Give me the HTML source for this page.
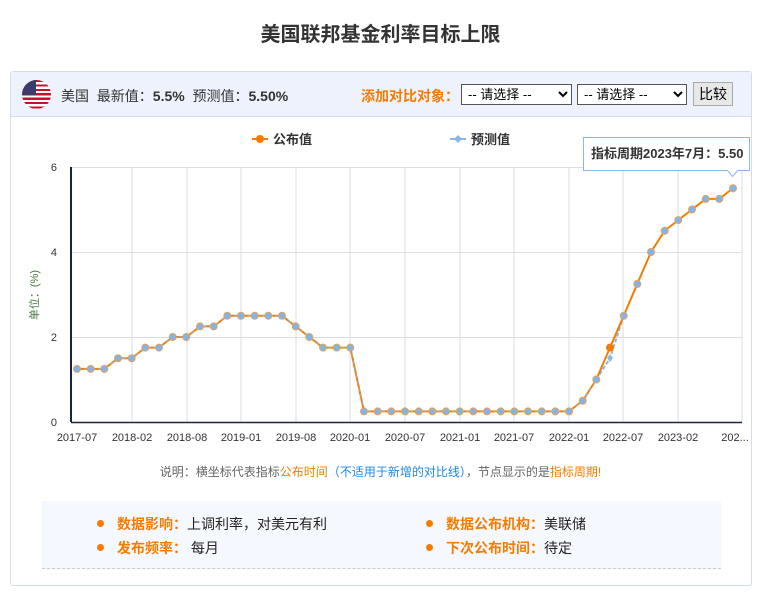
<!DOCTYPE html><html><head><meta charset="utf-8"><style>
body{margin:0;width:761px;height:592px;background:#fff;font-family:"Liberation Sans","Noto Sans CJK SC",sans-serif;position:relative;overflow:hidden}
.t{position:absolute;top:18px;left:0;width:761px;text-align:center;font-size:20px;font-weight:bold;color:#333}
.box{position:absolute;left:10px;top:71px;width:740px;height:513px;border:1px solid #d5dcec;border-radius:3px}
.hd{position:absolute;left:0;top:0;width:740px;height:44px;background:#edf2fc;border-bottom:1px solid #d5dcec}
.flag{position:absolute;left:11px;top:8px;width:29px;height:29px;border-radius:50%;overflow:hidden;background:repeating-linear-gradient(#c8102e 0 2.2px,#fff 2.2px 4.4px)}
.flag:before{content:"";position:absolute;left:0;top:0;width:14px;height:15px;background:#3c3b6e}
.hd span{position:absolute;top:14px;font-size:14px;color:#333}
b{font-weight:bold}
select{position:absolute;top:12px;height:21px;font-size:13px;border:1px solid #555;background:#fff;padding:0 2px}
.btn{position:absolute;left:682px;top:10px;width:38px;height:22px;border:1px solid #aaa;background:#e8e8e8;font-size:14px;text-align:center;line-height:22px}
.note{position:absolute;top:463px;left:0;width:761px;text-align:center;font-size:12px;color:#666}
.info{position:absolute;left:42px;top:501px;width:679px;height:67px;background:#f5f8fe;border-bottom:1px dashed #ccc}
.info div{position:absolute;font-size:14px;color:#222}
.info i{display:inline-block;width:7px;height:7px;border-radius:50%;background:#f57c00;margin-right:13px;vertical-align:2px}
.info em{font-style:normal;color:#f57c00;font-weight:bold}
</style></head><body>
<div class="t">美国联邦基金利率目标上限</div>
<div class="box"><div class="hd"><div class="flag"></div>
<span style="left:50px">美国 &nbsp;最新值：<b>5.5%</b> &nbsp;预测值：<b>5.50%</b></span>
<span style="left:350px;color:#f57c00;font-weight:bold">添加对比对象：</span>
<select style="left:450px;width:111px"><option>-- 请选择 --</option></select>
<select style="left:566px;width:110px"><option>-- 请选择 --</option></select>
<div class="btn">比较</div></div></div>
<svg width="761" height="592" style="position:absolute;left:0;top:0" font-family="Liberation Sans,Noto Sans CJK SC,sans-serif">
<g stroke="#ddd" stroke-width="1">
<line x1="71" x2="742" y1="167.5" y2="167.5"/><line x1="71" x2="742" y1="252.5" y2="252.5"/><line x1="71" x2="742" y1="337.5" y2="337.5"/>
<line x1="132" x2="132" y1="167" y2="422"/><line x1="187" x2="187" y1="167" y2="422"/><line x1="241" x2="241" y1="167" y2="422"/><line x1="296" x2="296" y1="167" y2="422"/><line x1="350" x2="350" y1="167" y2="422"/><line x1="405" x2="405" y1="167" y2="422"/><line x1="460" x2="460" y1="167" y2="422"/><line x1="514" x2="514" y1="167" y2="422"/><line x1="569" x2="569" y1="167" y2="422"/><line x1="623" x2="623" y1="167" y2="422"/><line x1="678" x2="678" y1="167" y2="422"/><line x1="742" x2="742" y1="167" y2="422"/>
</g>
<line x1="71" x2="71" y1="167" y2="422" stroke="#1a2340" stroke-width="2"/>
<line x1="71" x2="742" y1="422.5" y2="422.5" stroke="#1a2340" stroke-width="1.5"/>
<g font-size="11" fill="#333" text-anchor="end"><text x="57" y="426">0</text><text x="57" y="341">2</text><text x="57" y="256">4</text><text x="57" y="171">6</text></g>
<text x="38" y="295" font-size="11" fill="#4a7a3a" transform="rotate(-90 38 295)" text-anchor="middle">单位：(%)</text>
<g font-size="11" fill="#333" text-anchor="middle"><text x="77" y="441">2017-07</text><text x="132" y="441">2018-02</text><text x="187" y="441">2018-08</text><text x="241" y="441">2019-01</text><text x="296" y="441">2019-08</text><text x="350" y="441">2020-01</text><text x="405" y="441">2020-07</text><text x="460" y="441">2021-01</text><text x="514" y="441">2021-07</text><text x="569" y="441">2022-01</text><text x="623" y="441">2022-07</text><text x="678" y="441">2023-02</text><text x="735" y="441">202...</text></g>
<line x1="252" x2="268" y1="139" y2="139" stroke="#f57c00" stroke-width="2"/><circle cx="260" cy="139" r="4" fill="#f57c00"/>
<text x="273" y="144" font-size="13" font-weight="bold" fill="#333">公布值</text>
<line x1="450" x2="466" y1="139" y2="139" stroke="#8ab8e6" stroke-width="2"/><path d="M458 135l4 4-4 4-4-4z" fill="#8ab8e6"/>
<text x="471" y="144" font-size="13" font-weight="bold" fill="#333">预测值</text>
<polyline fill="none" stroke="#8ab8e6" stroke-width="2" stroke-dasharray="4 2" points="596.3,379.5 610,358.25 623.7,315.75"/>
<polyline id="pl" fill="none" stroke="#f57c00" stroke-width="2" points="77,368.9 90.7,368.9 104.3,368.9 118,358.25 131.7,358.25 145.3,347.6 159,347.6 172.7,337 186.3,337 200,326.4 213.7,326.4 227.3,315.75 241,315.75 254.7,315.75 268.3,315.75 282,315.75 295.7,326.4 309.3,337 323,347.6 336.7,347.6 350.3,347.6 364,411.4 377.7,411.4 391.3,411.4 405,411.4 418.7,411.4 432.3,411.4 446,411.4 459.7,411.4 473.3,411.4 487,411.4 500.7,411.4 514.3,411.4 528,411.4 541.7,411.4 555.3,411.4 569,411.4 582.7,400.75 596.3,379.5 610,347.6 623.7,315.75 637.3,283.9 651,252 664.7,230.75 678.3,220.1 692,209.5 705.7,198.9 719.3,198.9 733,188.25"/>
<polyline fill="none" stroke="#8ab8e6" stroke-width="1.2" stroke-dasharray="4 3" opacity="0.8" points="77,368.9 90.7,368.9 104.3,368.9 118,358.25 131.7,358.25 145.3,347.6 159,347.6 172.7,337 186.3,337 200,326.4 213.7,326.4 227.3,315.75 241,315.75 254.7,315.75 268.3,315.75 282,315.75 295.7,326.4 309.3,337 323,347.6 336.7,347.6 350.3,347.6 364,411.4 377.7,411.4 391.3,411.4 405,411.4 418.7,411.4 432.3,411.4 446,411.4 459.7,411.4 473.3,411.4 487,411.4 500.7,411.4 514.3,411.4 528,411.4 541.7,411.4 555.3,411.4 569,411.4 582.7,400.75 596.3,379.5"/>
<g fill="#86b3e2" stroke="#f0a050" stroke-width="0.8">
<circle cx="77" cy="368.9" r="3.6"/><circle cx="90.7" cy="368.9" r="3.6"/><circle cx="104.3" cy="368.9" r="3.6"/><circle cx="118" cy="358.25" r="3.6"/><circle cx="131.7" cy="358.25" r="3.6"/><circle cx="145.3" cy="347.6" r="3.6"/><circle cx="159" cy="347.6" r="3.6"/><circle cx="172.7" cy="337" r="3.6"/><circle cx="186.3" cy="337" r="3.6"/><circle cx="200" cy="326.4" r="3.6"/><circle cx="213.7" cy="326.4" r="3.6"/><circle cx="227.3" cy="315.75" r="3.6"/><circle cx="241" cy="315.75" r="3.6"/><circle cx="254.7" cy="315.75" r="3.6"/><circle cx="268.3" cy="315.75" r="3.6"/><circle cx="282" cy="315.75" r="3.6"/><circle cx="295.7" cy="326.4" r="3.6"/><circle cx="309.3" cy="337" r="3.6"/><circle cx="323" cy="347.6" r="3.6"/><circle cx="336.7" cy="347.6" r="3.6"/><circle cx="350.3" cy="347.6" r="3.6"/><circle cx="364" cy="411.4" r="3.6"/><circle cx="377.7" cy="411.4" r="3.6"/><circle cx="391.3" cy="411.4" r="3.6"/><circle cx="405" cy="411.4" r="3.6"/><circle cx="418.7" cy="411.4" r="3.6"/><circle cx="432.3" cy="411.4" r="3.6"/><circle cx="446" cy="411.4" r="3.6"/><circle cx="459.7" cy="411.4" r="3.6"/><circle cx="473.3" cy="411.4" r="3.6"/><circle cx="487" cy="411.4" r="3.6"/><circle cx="500.7" cy="411.4" r="3.6"/><circle cx="514.3" cy="411.4" r="3.6"/><circle cx="528" cy="411.4" r="3.6"/><circle cx="541.7" cy="411.4" r="3.6"/><circle cx="555.3" cy="411.4" r="3.6"/><circle cx="569" cy="411.4" r="3.6"/><circle cx="582.7" cy="400.75" r="3.6"/><circle cx="596.3" cy="379.5" r="3.6"/><circle cx="623.7" cy="315.75" r="3.6"/><circle cx="637.3" cy="283.9" r="3.6"/><circle cx="651" cy="252" r="3.6"/><circle cx="664.7" cy="230.75" r="3.6"/><circle cx="678.3" cy="220.1" r="3.6"/><circle cx="692" cy="209.5" r="3.6"/><circle cx="705.7" cy="198.9" r="3.6"/><circle cx="719.3" cy="198.9" r="3.6"/><circle cx="733" cy="188.25" r="3.6"/>
</g>
<circle cx="610" cy="347.6" r="4" fill="#f57c00"/>
<path d="M610 354l3 4-3 4-3-4z" fill="#8ab8e6"/>
<path d="M583.5 137.5h166v33h-12l-5 6-5-6h-144z" fill="#fff" stroke="#8ab8e6"/>
<text x="591" y="158" font-size="13" font-weight="bold" fill="#333">指标周期2023年7月：5.50</text>
</svg>
<div class="note">说明：横坐标代表指标<span style="color:#f57c00">公布时间</span><span style="color:#1e88e5">（不适用于新增的对比线）</span>，节点显示的是<span style="color:#f57c00">指标周期</span><span style="color:#f57c00">!</span></div>
<div class="info">
<div style="left:55px;top:13px"><i></i><em>数据影响：</em>上调利率，对美元有利</div>
<div style="left:55px;top:37px"><i></i><em>发布频率：</em> 每月</div>
<div style="left:384px;top:13px"><i></i><em>数据公布机构：</em>美联储</div>
<div style="left:384px;top:37px"><i></i><em>下次公布时间：</em>待定</div>
</div>
</body></html>
